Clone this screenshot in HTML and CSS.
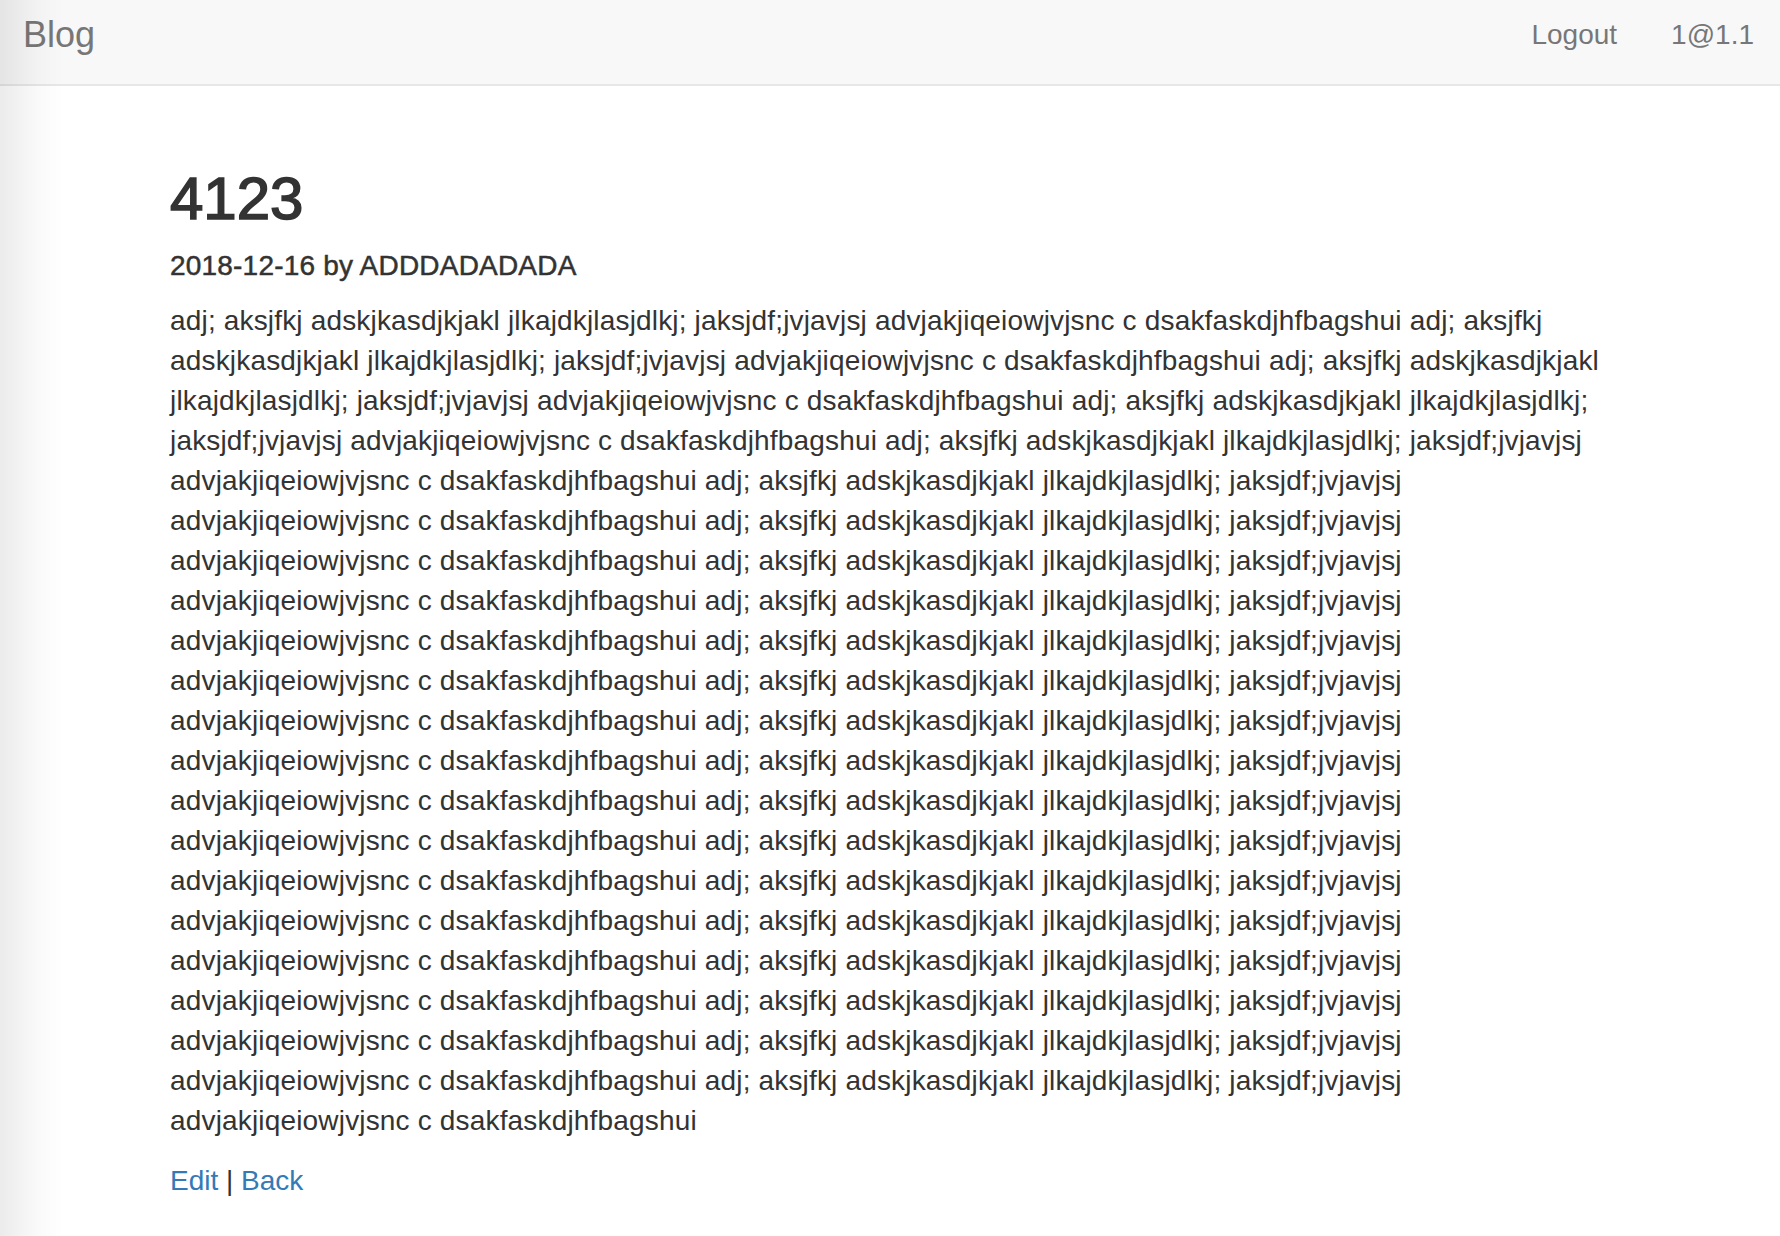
FILE: index.html
```html
<!DOCTYPE html>
<html lang="en">
<head>
<meta charset="utf-8">
<title>Blog</title>
<link rel="stylesheet" href="styles.css">
</head>
<body>
<div class="edge-shade"></div>
<nav class="navbar">
  <a class="brand" href="#">Blog</a>
  <ul class="nav-right">
    <li><a href="#">Logout</a></li>
    <li><a href="#">1@1.1</a></li>
  </ul>
</nav>
<main class="container">
  <h2 class="post-title">4123</h2>
  <div class="post-meta">2018-12-16 by ADDDADADADA</div>
  <p class="post-body">adj; aksjfkj adskjkasdjkjakl jlkajdkjlasjdlkj; jaksjdf;jvjavjsj advjakjiqeiowjvjsnc c dsakfaskdjhfbagshui adj; aksjfkj adskjkasdjkjakl jlkajdkjlasjdlkj; jaksjdf;jvjavjsj advjakjiqeiowjvjsnc c dsakfaskdjhfbagshui adj; aksjfkj adskjkasdjkjakl jlkajdkjlasjdlkj; jaksjdf;jvjavjsj advjakjiqeiowjvjsnc c dsakfaskdjhfbagshui adj; aksjfkj adskjkasdjkjakl jlkajdkjlasjdlkj; jaksjdf;jvjavjsj advjakjiqeiowjvjsnc c dsakfaskdjhfbagshui adj; aksjfkj adskjkasdjkjakl jlkajdkjlasjdlkj; jaksjdf;jvjavjsj advjakjiqeiowjvjsnc c dsakfaskdjhfbagshui adj; aksjfkj adskjkasdjkjakl jlkajdkjlasjdlkj; jaksjdf;jvjavjsj advjakjiqeiowjvjsnc c dsakfaskdjhfbagshui adj; aksjfkj adskjkasdjkjakl jlkajdkjlasjdlkj; jaksjdf;jvjavjsj advjakjiqeiowjvjsnc c dsakfaskdjhfbagshui adj; aksjfkj adskjkasdjkjakl jlkajdkjlasjdlkj; jaksjdf;jvjavjsj advjakjiqeiowjvjsnc c dsakfaskdjhfbagshui adj; aksjfkj adskjkasdjkjakl jlkajdkjlasjdlkj; jaksjdf;jvjavjsj advjakjiqeiowjvjsnc c dsakfaskdjhfbagshui adj; aksjfkj adskjkasdjkjakl jlkajdkjlasjdlkj; jaksjdf;jvjavjsj advjakjiqeiowjvjsnc c dsakfaskdjhfbagshui adj; aksjfkj adskjkasdjkjakl jlkajdkjlasjdlkj; jaksjdf;jvjavjsj advjakjiqeiowjvjsnc c dsakfaskdjhfbagshui adj; aksjfkj adskjkasdjkjakl jlkajdkjlasjdlkj; jaksjdf;jvjavjsj advjakjiqeiowjvjsnc c dsakfaskdjhfbagshui adj; aksjfkj adskjkasdjkjakl jlkajdkjlasjdlkj; jaksjdf;jvjavjsj advjakjiqeiowjvjsnc c dsakfaskdjhfbagshui adj; aksjfkj adskjkasdjkjakl jlkajdkjlasjdlkj; jaksjdf;jvjavjsj advjakjiqeiowjvjsnc c dsakfaskdjhfbagshui adj; aksjfkj adskjkasdjkjakl jlkajdkjlasjdlkj; jaksjdf;jvjavjsj advjakjiqeiowjvjsnc c dsakfaskdjhfbagshui adj; aksjfkj adskjkasdjkjakl jlkajdkjlasjdlkj; jaksjdf;jvjavjsj advjakjiqeiowjvjsnc c dsakfaskdjhfbagshui adj; aksjfkj adskjkasdjkjakl jlkajdkjlasjdlkj; jaksjdf;jvjavjsj advjakjiqeiowjvjsnc c dsakfaskdjhfbagshui adj; aksjfkj adskjkasdjkjakl jlkajdkjlasjdlkj; jaksjdf;jvjavjsj advjakjiqeiowjvjsnc c dsakfaskdjhfbagshui adj; aksjfkj adskjkasdjkjakl jlkajdkjlasjdlkj; jaksjdf;jvjavjsj advjakjiqeiowjvjsnc c dsakfaskdjhfbagshui adj; aksjfkj adskjkasdjkjakl jlkajdkjlasjdlkj; jaksjdf;jvjavjsj advjakjiqeiowjvjsnc c dsakfaskdjhfbagshui adj; aksjfkj adskjkasdjkjakl jlkajdkjlasjdlkj; jaksjdf;jvjavjsj advjakjiqeiowjvjsnc c dsakfaskdjhfbagshui</p>
  <div class="post-actions"><a href="#">Edit</a> | <a href="#">Back</a></div>
</main>
</body>
</html>
```
FILE: styles.css
```css
html, body {
  margin: 0;
  padding: 0;
  background: #fff;
}
body {
  font-family: "Liberation Sans", Arial, Helvetica, sans-serif;
  font-size: 28px;
  line-height: 40px;
  color: #333;
}
a {
  text-decoration: none;
}
.edge-shade {
  position: fixed;
  top: 0;
  left: 0;
  bottom: 0;
  width: 64px;
  background: linear-gradient(to right, rgba(0,0,0,0.08), rgba(0,0,0,0.02) 60%, rgba(0,0,0,0));
  pointer-events: none;
  z-index: 10;
}
.navbar {
  display: flex;
  align-items: flex-start;
  justify-content: space-between;
  height: 84px;
  box-sizing: content-box;
  background: #f8f8f8;
  border-bottom: 2px solid #e7e7e7;
  padding: 0 26px 0 23px;
}
.brand {
  display: block;
  font-size: 36px;
  line-height: 40px;
  padding-top: 15px;
  color: #777;
}
.nav-right {
  display: flex;
  gap: 54px;
  list-style: none;
  margin: 0;
  padding: 15px 0 0;
}
.nav-right a {
  display: block;
  font-size: 28px;
  line-height: 40px;
  color: #777;
}
.container {
  padding: 80px 170px 40px;
}
.post-title {
  margin: 0;
  font-size: 60px;
  line-height: 66px;
  font-weight: normal;
  -webkit-text-stroke: 1.6px #333;
  color: #333;
}
.post-meta {
  margin-top: 14px;
  font-weight: normal;
  -webkit-text-stroke: 0.5px #333;
  letter-spacing: 0.2px;
  font-size: 28px;
  line-height: 40px;
}
.post-body {
  margin: 15px 0 20px;
  letter-spacing: 0.17px;
  word-wrap: break-word;
}
.post-actions a {
  color: #337ab7;
}
```
